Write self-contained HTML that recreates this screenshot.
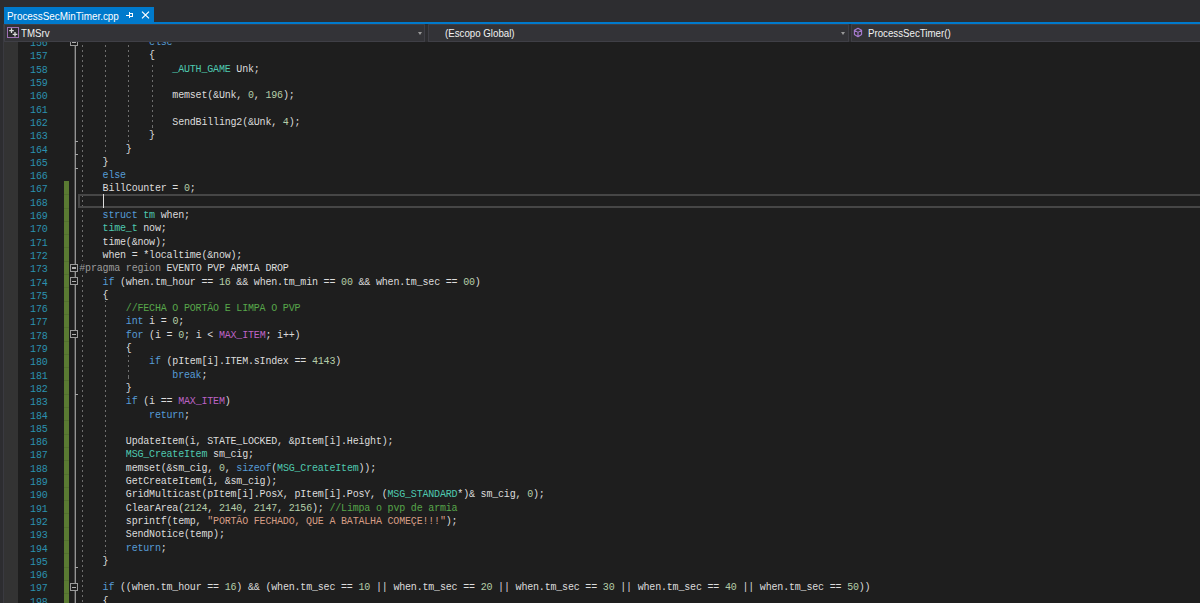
<!DOCTYPE html>
<html><head><meta charset="utf-8">
<style>
*{margin:0;padding:0;box-sizing:border-box}
html,body{width:1200px;height:603px;overflow:hidden;background:#2d2d30}
body{position:relative;font-family:"Liberation Sans",sans-serif}
.tab{position:absolute;left:4px;top:7px;width:150px;height:15px;background:#007acc}
.tabtxt{position:absolute;left:7px;top:8.6px;font-size:10px;line-height:15px;color:#fff;white-space:pre;transform:scaleX(0.99);transform-origin:0 0}
.bline{position:absolute;left:4px;top:22px;width:1196px;height:2px;background:#007acc}
.combo{position:absolute;top:24px;height:18px;background:#333337;border:1px solid #3f3f46}
.ctxt{position:absolute;top:24px;font-size:11px;line-height:18px;color:#f1f1f1;white-space:pre;transform:scaleX(0.882);transform-origin:0 0}
.arr{position:absolute;top:32px;width:0;height:0;border-left:2.5px solid transparent;border-right:2.5px solid transparent;border-top:3px solid #999}
.editor{position:absolute;left:4px;top:42px;width:1196px;height:561px;background:#1e1e1e;overflow:hidden}
.ind{position:absolute;left:4px;top:42px;width:14px;height:561px;background:#333333}
.ed{position:absolute;left:0;top:0;width:1200px;height:603px;clip-path:inset(42px 0 0 4px)}
.ln{position:absolute;left:17.5px;width:30px;text-align:right;font-family:"Liberation Mono",monospace;font-size:10px;letter-spacing:-0.2px;line-height:13.3px;color:#2b91af;white-space:pre}
.cl{position:absolute;left:79.3px;font-family:"Liberation Mono",monospace;font-size:10px;letter-spacing:-0.185px;line-height:13.3px;color:#dcdcdc;white-space:pre}
i{font-style:normal}
.k{color:#569cd6}.t{color:#4ec9b0}.n{color:#b5cea8}.s{color:#d69d85}.c{color:#57a64a}.m{color:#bd63c5}.p{color:#9b9b9b}
.g{position:absolute;width:1px;background:repeating-linear-gradient(to bottom,#6e6e6e 0,#6e6e6e 2.5px,transparent 2.5px,transparent 5px)}
.ovl{position:absolute;left:75px;top:42px;width:1px;height:561px;background:#939393;box-shadow:-1px 0 0 #4a4a4a}
.ob{position:absolute;left:70px;width:8px;height:8px;background:#1e1e1e;border:1px solid #9a9a9a}
.ob b{position:absolute;left:1px;top:2.5px;width:4px;height:1.3px;background:#b0b0b0}
.tk{position:absolute;left:75px;width:3px;height:1px;background:#a5a5a5}
.gb{position:absolute;left:64px;width:4.8px;background:#5a7a32}
.gs{position:absolute;left:64px;width:4.8px;height:1px;background:#526f2e}
.cur{position:absolute;left:78px;top:194px;width:1122px;height:14px;border:2px solid #464646;border-right:none}
.caret{position:absolute;left:103px;top:194px;width:1.4px;height:13.5px;background:#dcdcdc}
</style></head><body>
<div class="tab"></div>
<div class="tabtxt">ProcessSecMinTimer.cpp</div>
<svg style="position:absolute;left:120px;top:6px" width="36" height="16" viewBox="0 0 36 16" shape-rendering="crispEdges"><path d="M6 9h3v1h-3zM9 6h1v6h-1zM10 7h3v1h-3zM10 10h3v1h-3zM12 7h1v4h-1z" fill="#fff"/></svg>
<svg style="position:absolute;left:141px;top:11px" width="9" height="8" viewBox="0 0 9 8"><path d="M1 0.6L8 7.4M8 0.6L1 7.4" stroke="#fff" stroke-width="1.25"/></svg>
<div class="bline"></div>
<div class="combo" style="left:4px;width:421px"></div>
<div class="combo" style="left:428px;width:421px"></div>
<div class="combo" style="left:851px;width:360px"></div>
<svg style="position:absolute;left:0;top:24px" width="24" height="18" viewBox="0 0 24 18"><rect x="7.5" y="3.5" width="11" height="10" fill="#2a2a2d" stroke="#9d6fb3" stroke-width="1"/><path d="M11.5 4.3V8.9M9.2 6.6H13.8M15 8V12.6M12.7 10.3H17.3" stroke="#dadada" stroke-width="1.3"/></svg>
<div class="ctxt" style="left:21px">TMSrv</div>
<div class="arr" style="left:417.5px"></div>
<div class="ctxt" style="left:445px">(Escopo Global)</div>
<div class="arr" style="left:841px"></div>
<svg style="position:absolute;left:850px;top:24px" width="16" height="18" viewBox="0 0 16 18"><path d="M8 4.2L11.6 6.2V10.6L8 12.7L4.4 10.6V6.2Z M4.7 6.4L8 8.4L11.3 6.4 M8 8.4V12.4" fill="none" stroke="#a77bd0" stroke-width="1.1" stroke-linejoin="round"/></svg>
<div class="ctxt" style="left:868px">ProcessSecTimer()</div>
<div class="editor"></div>
<div style="position:absolute;left:3px;top:24px;width:1px;height:579px;background:#3a3a40"></div>
<div class="ind"></div>
<div class="ed">
<div class="gb" style="top:181.40px;height:421.60px"></div>
<div class="gs" style="top:194.20px"></div>
<div class="gs" style="top:207.50px"></div>
<div class="gs" style="top:220.80px"></div>
<div class="gs" style="top:234.10px"></div>
<div class="gs" style="top:247.40px"></div>
<div class="gs" style="top:260.70px"></div>
<div class="gs" style="top:274.00px"></div>
<div class="gs" style="top:287.30px"></div>
<div class="gs" style="top:300.60px"></div>
<div class="gs" style="top:313.90px"></div>
<div class="gs" style="top:327.20px"></div>
<div class="gs" style="top:340.50px"></div>
<div class="gs" style="top:353.80px"></div>
<div class="gs" style="top:367.10px"></div>
<div class="gs" style="top:380.40px"></div>
<div class="gs" style="top:393.70px"></div>
<div class="gs" style="top:407.00px"></div>
<div class="gs" style="top:420.30px"></div>
<div class="gs" style="top:433.60px"></div>
<div class="gs" style="top:446.90px"></div>
<div class="gs" style="top:460.20px"></div>
<div class="gs" style="top:473.50px"></div>
<div class="gs" style="top:486.80px"></div>
<div class="gs" style="top:500.10px"></div>
<div class="gs" style="top:513.40px"></div>
<div class="gs" style="top:526.70px"></div>
<div class="gs" style="top:540.00px"></div>
<div class="gs" style="top:553.30px"></div>
<div class="gs" style="top:566.60px"></div>
<div class="gs" style="top:579.90px"></div>
<div class="gs" style="top:593.20px"></div>
<div class="gs" style="top:606.50px"></div>
<div class="ovl"></div>
<div class="ob" style="top:37.75px"><b></b></div>
<div class="ob" style="top:263.85px"><b></b></div>
<div class="ob" style="top:277.15px"><b></b></div>
<div class="ob" style="top:330.35px"><b></b></div>
<div class="ob" style="top:583.05px"><b></b></div>
<div class="tk" style="top:141.00px"></div>
<div class="tk" style="top:154.30px"></div>
<div class="tk" style="top:167.60px"></div>
<div class="tk" style="top:393.70px"></div>
<div class="tk" style="top:566.60px"></div>
<div class="g" style="left:82px;top:35px;height:226px;background-position:0 0px"></div>
<div class="g" style="left:82px;top:274px;height:346px;background-position:0 -4px"></div>
<div class="g" style="left:105px;top:35px;height:120px;background-position:0 0px"></div>
<div class="g" style="left:105px;top:301px;height:253px;background-position:0 -1px"></div>
<div class="g" style="left:128px;top:35px;height:107px;background-position:0 0px"></div>
<div class="g" style="left:128px;top:354px;height:27px;background-position:0 -4px"></div>
<div class="g" style="left:152px;top:62px;height:66px;background-position:0 -2px"></div>
<div class="cur"></div>
<div class="caret"></div>
<div class="ln" style="top:37.10px">156</div>
<div class="cl" style="top:36.10px">            <i class="k">else</i></div>
<div class="ln" style="top:50.40px">157</div>
<div class="cl" style="top:49.40px">            {</div>
<div class="ln" style="top:63.70px">158</div>
<div class="cl" style="top:62.70px">                <i class="t">_AUTH_GAME</i> Unk;</div>
<div class="ln" style="top:77.00px">159</div>
<div class="ln" style="top:90.30px">160</div>
<div class="cl" style="top:89.30px">                memset(&amp;Unk, <i class="n">0</i>, <i class="n">196</i>);</div>
<div class="ln" style="top:103.60px">161</div>
<div class="ln" style="top:116.90px">162</div>
<div class="cl" style="top:115.90px">                SendBilling2(&amp;Unk, <i class="n">4</i>);</div>
<div class="ln" style="top:130.20px">163</div>
<div class="cl" style="top:129.20px">            }</div>
<div class="ln" style="top:143.50px">164</div>
<div class="cl" style="top:142.50px">        }</div>
<div class="ln" style="top:156.80px">165</div>
<div class="cl" style="top:155.80px">    }</div>
<div class="ln" style="top:170.10px">166</div>
<div class="cl" style="top:169.10px">    <i class="k">else</i></div>
<div class="ln" style="top:183.40px">167</div>
<div class="cl" style="top:182.40px">    BillCounter = <i class="n">0</i>;</div>
<div class="ln" style="top:196.70px">168</div>
<div class="ln" style="top:210.00px">169</div>
<div class="cl" style="top:209.00px">    <i class="k">struct</i> <i class="t">tm</i> when;</div>
<div class="ln" style="top:223.30px">170</div>
<div class="cl" style="top:222.30px">    <i class="t">time_t</i> now;</div>
<div class="ln" style="top:236.60px">171</div>
<div class="cl" style="top:235.60px">    time(&amp;now);</div>
<div class="ln" style="top:249.90px">172</div>
<div class="cl" style="top:248.90px">    when = *localtime(&amp;now);</div>
<div class="ln" style="top:263.20px">173</div>
<div class="cl" style="top:262.20px"><i class="p">#pragma region</i> EVENTO PVP ARMIA DROP</div>
<div class="ln" style="top:276.50px">174</div>
<div class="cl" style="top:275.50px">    <i class="k">if</i> (when.tm_hour == <i class="n">16</i> &amp;&amp; when.tm_min == <i class="n">00</i> &amp;&amp; when.tm_sec == <i class="n">00</i>)</div>
<div class="ln" style="top:289.80px">175</div>
<div class="cl" style="top:288.80px">    {</div>
<div class="ln" style="top:303.10px">176</div>
<div class="cl" style="top:302.10px">        <i class="c">//FECHA O PORTÃO E LIMPA O PVP</i></div>
<div class="ln" style="top:316.40px">177</div>
<div class="cl" style="top:315.40px">        <i class="k">int</i> i = <i class="n">0</i>;</div>
<div class="ln" style="top:329.70px">178</div>
<div class="cl" style="top:328.70px">        <i class="k">for</i> (i = <i class="n">0</i>; i &lt; <i class="m">MAX_ITEM</i>; i++)</div>
<div class="ln" style="top:343.00px">179</div>
<div class="cl" style="top:342.00px">        {</div>
<div class="ln" style="top:356.30px">180</div>
<div class="cl" style="top:355.30px">            <i class="k">if</i> (pItem[i].ITEM.sIndex == <i class="n">4143</i>)</div>
<div class="ln" style="top:369.60px">181</div>
<div class="cl" style="top:368.60px">                <i class="k">break</i>;</div>
<div class="ln" style="top:382.90px">182</div>
<div class="cl" style="top:381.90px">        }</div>
<div class="ln" style="top:396.20px">183</div>
<div class="cl" style="top:395.20px">        <i class="k">if</i> (i == <i class="m">MAX_ITEM</i>)</div>
<div class="ln" style="top:409.50px">184</div>
<div class="cl" style="top:408.50px">            <i class="k">return</i>;</div>
<div class="ln" style="top:422.80px">185</div>
<div class="ln" style="top:436.10px">186</div>
<div class="cl" style="top:435.10px">        UpdateItem(i, STATE_LOCKED, &amp;pItem[i].Height);</div>
<div class="ln" style="top:449.40px">187</div>
<div class="cl" style="top:448.40px">        <i class="t">MSG_CreateItem</i> sm_cig;</div>
<div class="ln" style="top:462.70px">188</div>
<div class="cl" style="top:461.70px">        memset(&amp;sm_cig, <i class="n">0</i>, <i class="k">sizeof</i>(<i class="t">MSG_CreateItem</i>));</div>
<div class="ln" style="top:476.00px">189</div>
<div class="cl" style="top:475.00px">        GetCreateItem(i, &amp;sm_cig);</div>
<div class="ln" style="top:489.30px">190</div>
<div class="cl" style="top:488.30px">        GridMulticast(pItem[i].PosX, pItem[i].PosY, (<i class="t">MSG_STANDARD</i>*)&amp; sm_cig, <i class="n">0</i>);</div>
<div class="ln" style="top:502.60px">191</div>
<div class="cl" style="top:501.60px">        ClearArea(<i class="n">2124</i>, <i class="n">2140</i>, <i class="n">2147</i>, <i class="n">2156</i>); <i class="c">//Limpa o pvp de armia</i></div>
<div class="ln" style="top:515.90px">192</div>
<div class="cl" style="top:514.90px">        sprintf(temp, <i class="s">"PORTÃO FECHADO, QUE A BATALHA COMEÇE!!!"</i>);</div>
<div class="ln" style="top:529.20px">193</div>
<div class="cl" style="top:528.20px">        SendNotice(temp);</div>
<div class="ln" style="top:542.50px">194</div>
<div class="cl" style="top:541.50px">        <i class="k">return</i>;</div>
<div class="ln" style="top:555.80px">195</div>
<div class="cl" style="top:554.80px">    }</div>
<div class="ln" style="top:569.10px">196</div>
<div class="ln" style="top:582.40px">197</div>
<div class="cl" style="top:581.40px">    <i class="k">if</i> ((when.tm_hour == <i class="n">16</i>) &amp;&amp; (when.tm_sec == <i class="n">10</i> || when.tm_sec == <i class="n">20</i> || when.tm_sec == <i class="n">30</i> || when.tm_sec == <i class="n">40</i> || when.tm_sec == <i class="n">50</i>))</div>
<div class="ln" style="top:595.70px">198</div>
<div class="cl" style="top:594.70px">    {</div>
<div class="ln" style="top:609.00px">199</div>
<div class="cl" style="top:608.00px">        </div>
</div>
</body></html>
